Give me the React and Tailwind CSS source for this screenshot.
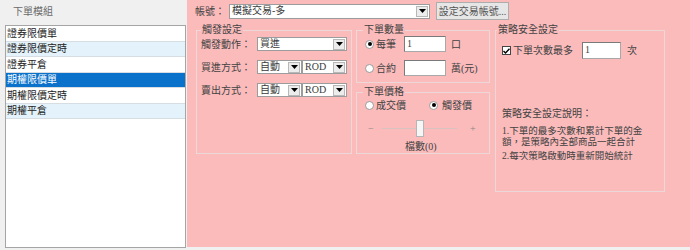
import React from 'react';

const FONT = { fontFamily: '"Liberation Serif", "Noto Sans CJK TC", serif' };

const Arrow = () => (
  <span className="w-[12px] h-[11px] mr-px bg-[#ececec] border border-[#b8b8b8] flex items-center justify-center shrink-0">
    <svg width="7" height="4" viewBox="0 0 7 4">
      <path d="M0 0 L7 0 L3.5 4 Z" fill="#000" />
    </svg>
  </span>
);

const Select = ({ value, className = '' }) => (
  <div className={`h-[14px] bg-white border border-[#9c9c9c] flex items-center justify-between ${className}`}>
    <span className="pl-[2px] leading-[12px] text-[#3a3a3a]">{value}</span>
    <Arrow />
  </div>
);

const Radio = ({ checked }) => (
  <span className="w-[9px] h-[9px] rounded-full bg-white border border-[#9a9a9a] flex items-center justify-center shrink-0">
    {checked && <span className="w-[4px] h-[4px] rounded-full bg-black" />}
  </span>
);

const Input = ({ value, className = '' }) => (
  <div className={`bg-white border border-[#a8a8a8] border-t-[#7a7a7a] border-l-[#7a7a7a] pl-[2px] text-[#444] leading-[14px] ${className}`}>
    {value}
  </div>
);

const Group = ({ title, className = '', legendClass = '', children }) => (
  <fieldset className={`border border-[#ecd8d8] ${className}`}>
    <legend className={`px-px leading-[12px] ${legendClass}`}>{title}</legend>
    {children}
  </fieldset>
);

const items = [
  { name: '證券限價單', bg: 'bg-white' },
  { name: '證券限價定時', bg: 'bg-[#e4f2fb]' },
  { name: '證券平倉', bg: 'bg-white' },
  { name: '期權限價單', bg: 'bg-[#0b72cc] text-white' },
  { name: '期權限價定時', bg: 'bg-white' },
  { name: '期權平倉', bg: 'bg-[#e4f2fb]' },
];

export default function App() {
  return (
    <div className="w-[690px] h-[250px] bg-[#f0f0f0] flex overflow-hidden text-[10px]" style={FONT}>
      {/* left: module list */}
      <div className="w-[187px] flex flex-col shrink-0">
        <div className="h-[25px] pl-[13px] pt-[6px] leading-[12px] text-[#6a6a6a]">下單模組</div>
        <div className="ml-[5px] w-[181px] h-[223px] border border-[#a5a5a5] bg-white">
          {items.map((it) => (
            <div
              key={it.name}
              className={`h-[15.5px] pl-px flex items-center border-b border-[#d6dde3] text-[#222] ${it.bg}`}
            >
              {it.name}
            </div>
          ))}
        </div>
      </div>

      {/* right: settings */}
      <div className="w-[503px] h-[247px] bg-[#fbbbbb] pl-[8px] pt-[2px] text-[#424242]">
        <div className="h-[18px] flex items-center">
          <span className="w-[34px]">帳號：</span>
          <Select value="模擬交易-多" className="w-[201px] h-[15px]" />
          <div className="ml-[6px] w-[73px] h-[18px] bg-[#e6e6e6] border border-[#adadad] flex items-center justify-center text-[#555]">
            設定交易帳號...
          </div>
        </div>

        <div className="mt-[4px] flex items-start">
          <Group title="觸發設定" className="ml-px w-[156px] h-[130px]" legendClass="ml-[4px]">
            <div className="pl-[4px] mt-px flex flex-col gap-[9px]">
              <div className="flex items-center h-[14px]">
                <span className="w-[56px]">觸發動作：</span>
                <Select value="買進" className="w-[90px]" />
              </div>
              <div className="flex items-center h-[14px]">
                <span className="w-[56px]">買進方式：</span>
                <Select value="自動" className="w-[45px]" />
                <Select value="ROD" className="w-[45px]" />
              </div>
              <div className="flex items-center h-[14px]">
                <span className="w-[56px]">賣出方式：</span>
                <Select value="自動" className="w-[45px]" />
                <Select value="ROD" className="w-[45px]" />
              </div>
            </div>
          </Group>

          <div className="ml-[4px] w-[134px] flex flex-col">
            <Group title="下單數量" className="h-[59px]" legendClass="ml-[6px]">
              <div className="pl-[8px] flex flex-col gap-[8px]">
                <div className="flex items-center h-[16px]">
                  <Radio checked />
                  <span className="ml-[2px] w-[28px]">每筆</span>
                  <Input value="1" className="w-[42px] h-[16px]" />
                  <span className="ml-[5px]">口</span>
                </div>
                <div className="flex items-center h-[16px]">
                  <Radio />
                  <span className="ml-[2px] w-[28px]">合約</span>
                  <Input value="" className="w-[42px] h-[16px]" />
                  <span className="ml-[5px]">萬(元)</span>
                </div>
              </div>
            </Group>
            <Group title="下單價格" className="mt-[3px] h-[68px]" legendClass="ml-[6px]">
              <div className="pl-[8px]">
                <div className="flex items-center h-[14px]">
                  <div className="w-[64px] flex items-center">
                    <Radio />
                    <span className="ml-[2px]">成交價</span>
                  </div>
                  <Radio checked />
                  <span className="ml-[4px]">觸發價</span>
                </div>
                <div className="mt-[7px] h-[18px] flex items-center text-[#888]">
                  <span className="ml-[3px] w-[12px]">−</span>
                  <div className="ml-[2px] w-[75px] h-[18px] flex items-center">
                    <div className="w-[34px] h-px bg-[#d8c2c2]" />
                    <div className="w-[8px] h-[17px] bg-[#f6f6f6] border border-[#b5b5b5]" />
                    <div className="w-[33px] h-px bg-[#d8c2c2]" />
                  </div>
                  <span className="ml-[13px]">+</span>
                </div>
                <div className="mt-[4px] h-[12px] leading-[12px] pl-[40px]">檔數(0)</div>
              </div>
            </Group>
          </div>

          <Group title="策略安全設定" className="ml-[5px] w-[170px] h-[168px]" legendClass="ml-px">
            <div className="pl-[6px]">
              <div className="mt-[6px] h-[17px] flex items-center">
                <span className="w-[9px] h-[9px] bg-white border border-[#444] flex items-center justify-center shrink-0">
                  <svg width="7" height="6" viewBox="0 0 7 6">
                    <path d="M0.5 3 L2.5 5 L6.5 0.8" stroke="#000" strokeWidth="1.4" fill="none" />
                  </svg>
                </span>
                <span className="ml-[2px] w-[69px]">下單次數最多</span>
                <Input value="1" className="w-[39px] h-[17px]" />
                <span className="ml-[6px]">次</span>
              </div>
              <div className="mt-[49px] leading-[12px]">策略安全設定說明：</div>
              <div className="mt-[6px] leading-[11px] text-[9.5px]">
                1.下單的最多次數和累計下單的金
                <br />
                額，是策略內全部商品一起合計
              </div>
              <div className="mt-[3px] leading-[11px] text-[9.5px]">2.每次策略啟動時重新開始統計</div>
            </div>
          </Group>
        </div>
      </div>
    </div>
  );
}
